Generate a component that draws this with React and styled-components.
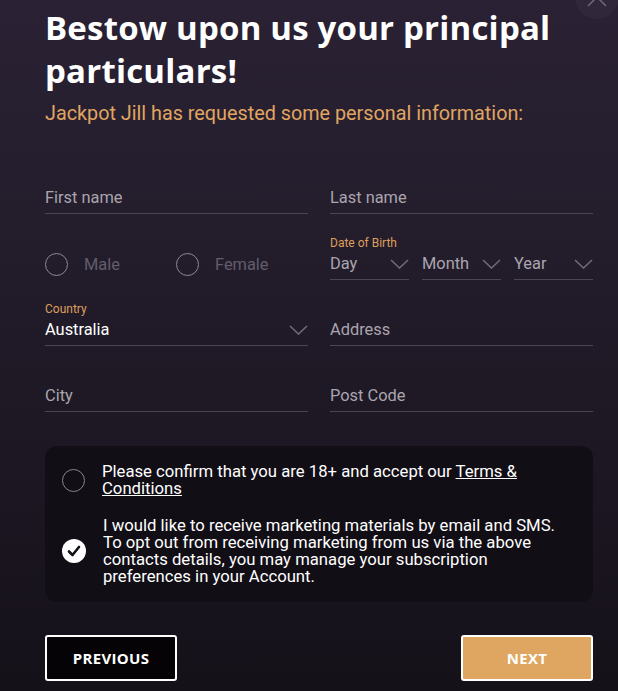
import styled, { createGlobalStyle } from 'styled-components';

const GlobalStyle = createGlobalStyle`
  html, body {
    margin: 0;
    padding: 0;
    background: #1a1520;
  }
  * { box-sizing: border-box; }
`;

const Modal = styled.div`
  position: relative;
  width: 618px;
  height: 691px;
  overflow: hidden;
  background: linear-gradient(180deg, #2a2234 0%, #211b29 45%, #151119 100%);
  padding: 6px 25px 0 45px;
  font-family: Roboto, "Liberation Sans", sans-serif;
`;

const CloseButton = styled.button`
  position: absolute;
  top: -25px;
  right: -1px;
  width: 44px;
  height: 44px;
  border: none;
  border-radius: 50%;
  background: rgba(255, 255, 255, 0.03);
  display: flex;
  align-items: center;
  justify-content: center;
  padding: 0;
`;

const Title = styled.h1`
  margin: 0;
  font-family: "Open Sans", "Liberation Sans", sans-serif;
  font-weight: 700;
  font-size: 33px;
  line-height: 43px;
  color: #ffffff;
  letter-spacing: 0.2px;
`;

const Subtitle = styled.p`
  margin: 10px 0 0;
  font-size: 19.8px;
  line-height: 24px;
  color: #e0a561;
`;

const FormGrid = styled.div`
  margin-top: 43px;
  display: grid;
  grid-template-columns: 263px 263px;
  column-gap: 22px;
  row-gap: 21px;
`;

const Field = styled.div`
  display: flex;
  flex-direction: column;
`;

const Label = styled.div`
  height: 16px;
  font-size: 12px;
  line-height: 16px;
  color: #df9f5d;
`;

const Control = styled.div`
  height: 29px;
  display: flex;
  align-items: center;
  justify-content: space-between;
  border-bottom: ${p => (p.$plain ? 'none' : '1px solid #4b4553')};
  font-size: 16.4px;
  padding-bottom: 3px;
  color: ${p => (p.$filled ? '#ffffff' : '#aaa5ae')};
`;

const DateRow = styled.div`
  display: grid;
  grid-template-columns: 79px 79px 79px;
  column-gap: 13px;
`;

const GenderRow = styled.div`
  display: flex;
  align-items: center;
`;

const GenderOption = styled.label`
  display: flex;
  align-items: center;
  gap: 16px;
  width: 131px;
  font-size: 16.4px;
  color: #625c6b;
`;

const Circle = styled.span`
  width: 23px;
  height: 23px;
  border-radius: 50%;
  border: 1.5px solid ${p => p.$color || '#8e8896'};
  flex-shrink: 0;
`;

const Consent = styled.div`
  margin-top: 34px;
  background: #120e16;
  border-radius: 12px;
  padding: 17px 20px 17px 17px;
  display: flex;
  flex-direction: column;
  gap: 20px;
`;

const ConsentRow = styled.div`
  display: flex;
  align-items: center;
  gap: 17px;
`;

const ConsentText = styled.p`
  margin: 0;
  max-width: 452px;
  font-size: 16.7px;
  line-height: 17px;
  color: #ffffff;
  a { color: #ffffff; text-decoration: underline; }
`;

const Checked = styled.span`
  width: 24px;
  height: 24px;
  border-radius: 50%;
  background: #ffffff;
  display: flex;
  align-items: center;
  justify-content: center;
  flex-shrink: 0;
`;

const Actions = styled.div`
  margin-top: 33px;
  display: flex;
  justify-content: space-between;
  width: 548px;
`;

const Button = styled.button`
  width: 132px;
  height: 46px;
  border: 2px solid #ffffff;
  border-radius: 3px;
  background: ${p => (p.$primary ? '#dea660' : '#050306')};
  color: #ffffff;
  font-family: "Open Sans", "Liberation Sans", sans-serif;
  font-weight: 700;
  font-size: 15px;
  letter-spacing: 0.3px;
`;

function Chevron() {
  return (
    <svg width="19" height="10" viewBox="0 0 19 10" fill="none">
      <path d="M1 1 L9.5 9 L18 1" stroke="#6f6978" strokeWidth="1.6" />
    </svg>
  );
}

function TextField({ label, placeholder, value, select }) {
  return (
    <Field>
      <Label>{label}</Label>
      <Control $filled={!!value}>
        <span>{value || placeholder}</span>
        {select && <Chevron />}
      </Control>
    </Field>
  );
}

export default function App() {
  return (
    <>
      <GlobalStyle />
      <Modal>
        <CloseButton aria-label="close">
          <svg width="22" height="22" viewBox="0 0 22 22">
            <path d="M2 2 L20 20 M20 2 L2 20" stroke="#6d6777" strokeWidth="1.6" />
          </svg>
        </CloseButton>
        <Title>Bestow upon us your principal particulars!</Title>
        <Subtitle>Jackpot Jill has requested some personal information:</Subtitle>

        <FormGrid>
          <TextField placeholder="First name" />
          <TextField placeholder="Last name" />

          <Field>
            <Label />
            <Control $plain>
              <GenderRow>
                <GenderOption><Circle />Male</GenderOption>
                <GenderOption><Circle />Female</GenderOption>
              </GenderRow>
            </Control>
          </Field>
          <Field>
            <Label>Date of Birth</Label>
            <DateRow>
              <Control><span>Day</span><Chevron /></Control>
              <Control><span>Month</span><Chevron /></Control>
              <Control><span>Year</span><Chevron /></Control>
            </DateRow>
          </Field>

          <TextField label="Country" value="Australia" select />
          <TextField placeholder="Address" />

          <TextField placeholder="City" />
          <TextField placeholder="Post Code" />
        </FormGrid>

        <Consent>
          <ConsentRow>
            <Circle $color="#8a8490" />
            <ConsentText>
              Please confirm that you are 18+ and accept our <a href="#terms">Terms &amp; Conditions</a>
            </ConsentText>
          </ConsentRow>
          <ConsentRow>
            <Checked>
              <svg width="14" height="12" viewBox="0 0 14 12">
                <path d="M2 6.5 L5.5 10 L12 2" stroke="#120e16" strokeWidth="2.6" fill="none" strokeLinecap="round" strokeLinejoin="round" />
              </svg>
            </Checked>
            <ConsentText>
              I would like to receive marketing materials by email and SMS. To opt out from receiving marketing from us via the above contacts details, you may manage your subscription preferences in your Account.
            </ConsentText>
          </ConsentRow>
        </Consent>

        <Actions>
          <Button>PREVIOUS</Button>
          <Button $primary>NEXT</Button>
        </Actions>
      </Modal>
    </>
  );
}
